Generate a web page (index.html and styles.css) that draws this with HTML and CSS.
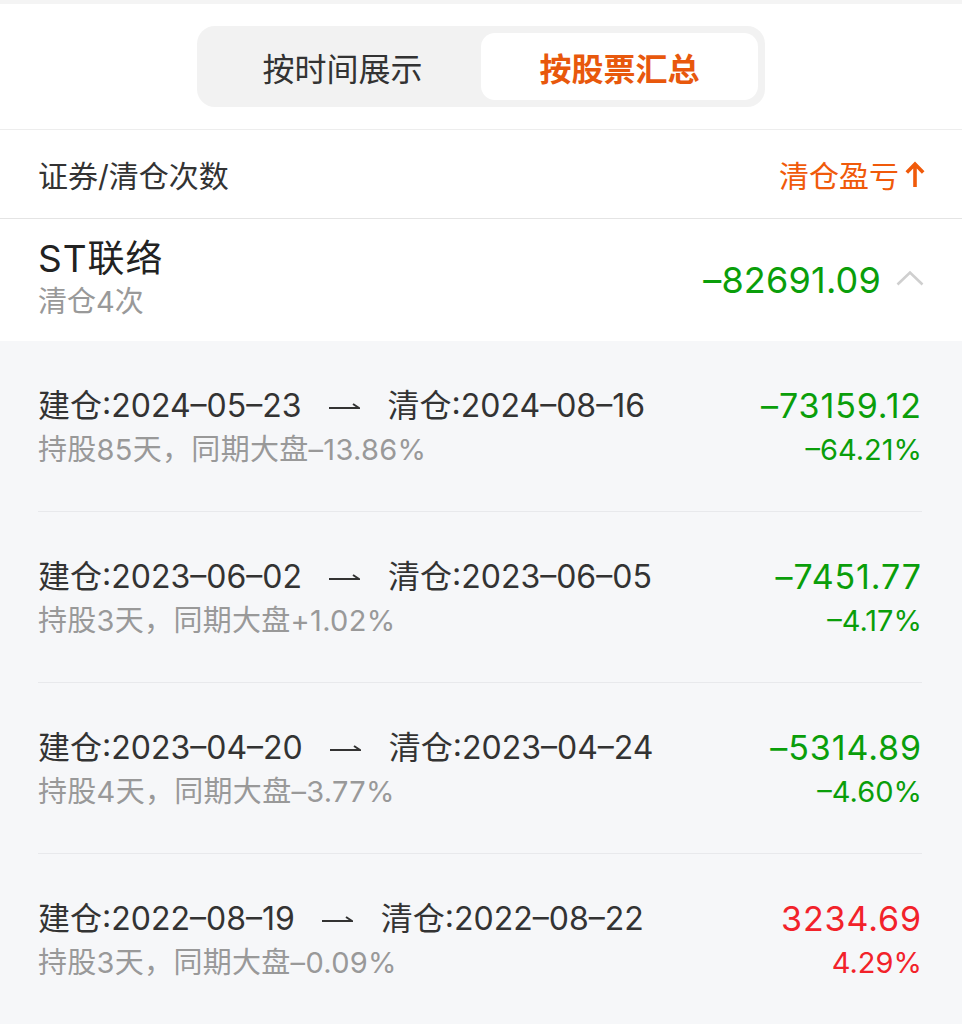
FILE: index.html
```html
<!DOCTYPE html>
<html lang="zh-CN">
<head>
  <meta charset="UTF-8">
  <title>清仓记录</title>
  <link rel="stylesheet" href="styles.css">
</head>
<body>
  <div class="topstrip"></div>

  <div class="tabs-wrap">
    <div class="tabs">
      <div class="tab">按时间展示</div>
      <div class="tab active">按股票汇总</div>
    </div>
  </div>

  <div class="list-head">
    <span>证券/清仓次数</span>
    <span class="sort">清仓盈亏
      <svg class="sort-arrow" width="20" height="27" viewBox="0 0 20 27">
        <path d="M10 4 V27 M1.8 12.5 L10 4 L18.2 12.5" fill="none" stroke="#f05a0a" stroke-width="3.6"/>
      </svg>
    </span>
  </div>

  <div class="stock">
    <div class="stock-info">
      <div class="stock-name">ST联络</div>
      <div class="stock-count">清仓4次</div>
    </div>
    <div class="stock-total">
      <span class="green">–82691.09</span>
      <svg class="chevron" width="28" height="16" viewBox="0 0 28 16">
        <polyline points="1.5,14.5 14,2.5 26.5,14.5" fill="none" stroke="#cfcfcf" stroke-width="2.6"/>
      </svg>
    </div>
  </div>

  <div class="trades">
    <div class="trade">
      <div class="trade-left">
        <div class="dates">
          <span>建仓:2024–05–23</span>
          <svg class="harpoon" width="32" height="14" viewBox="0 0 32 14"><path d="M1 9 H31 L25 5" fill="none" stroke="#333" stroke-width="2"/></svg>
          <span>清仓:2024–08–16</span>
        </div>
        <div class="note">持股85天，同期大盘–13.86%</div>
      </div>
      <div class="trade-right">
        <div class="amount green">–73159.12</div>
        <div class="rate green">–64.21%</div>
      </div>
    </div>

    <div class="trade">
      <div class="trade-left">
        <div class="dates">
          <span>建仓:2023–06–02</span>
          <svg class="harpoon" width="32" height="14" viewBox="0 0 32 14"><path d="M1 9 H31 L25 5" fill="none" stroke="#333" stroke-width="2"/></svg>
          <span>清仓:2023–06–05</span>
        </div>
        <div class="note">持股3天，同期大盘+1.02%</div>
      </div>
      <div class="trade-right">
        <div class="amount green">–7451.77</div>
        <div class="rate green">–4.17%</div>
      </div>
    </div>

    <div class="trade">
      <div class="trade-left">
        <div class="dates">
          <span>建仓:2023–04–20</span>
          <svg class="harpoon" width="32" height="14" viewBox="0 0 32 14"><path d="M1 9 H31 L25 5" fill="none" stroke="#333" stroke-width="2"/></svg>
          <span>清仓:2023–04–24</span>
        </div>
        <div class="note">持股4天，同期大盘–3.77%</div>
      </div>
      <div class="trade-right">
        <div class="amount green">–5314.89</div>
        <div class="rate green">–4.60%</div>
      </div>
    </div>

    <div class="trade">
      <div class="trade-left">
        <div class="dates">
          <span>建仓:2022–08–19</span>
          <svg class="harpoon" width="32" height="14" viewBox="0 0 32 14"><path d="M1 9 H31 L25 5" fill="none" stroke="#333" stroke-width="2"/></svg>
          <span>清仓:2022–08–22</span>
        </div>
        <div class="note">持股3天，同期大盘–0.09%</div>
      </div>
      <div class="trade-right">
        <div class="amount red">3234.69</div>
        <div class="rate red">4.29%</div>
      </div>
    </div>
  </div>
</body>
</html>
```

FILE: styles.css
```css
body {
  margin: 0;
  background: #f6f7f9;
  font-family: Inter, "Noto Sans CJK SC", sans-serif;
  color: #333;
}

.topstrip {
  height: 4px;
  background: #f4f4f4;
}

.green { color: #0a9e0a; }
.red { color: #f2222a; }

/* segmented control */
.tabs-wrap {
  background: #fff;
  padding: 22px 0 22px;
  border-bottom: 1px solid #ededed;
  display: flex;
  justify-content: center;
}

.tabs {
  display: flex;
  width: 554px;
  padding: 7px;
  background: #f2f2f2;
  border-radius: 18px;
}

.tab {
  flex: 1;
  height: 67px;
  display: flex;
  align-items: center;
  justify-content: center;
  font-size: 32px;
  color: #333;
  border-radius: 14px;
}

.tab.active {
  background: #fff;
  color: #e8580c;
  font-weight: bold;
}

/* column header */
.list-head {
  background: #fff;
  height: 88px;
  padding: 0 37px 0 38px;
  display: flex;
  align-items: center;
  justify-content: space-between;
  font-size: 30px;
  color: #333;
  border-bottom: 1px solid #e4e4e4;
}

.sort {
  color: #f05a0a;
  display: flex;
  align-items: center;
}

.sort-arrow {
  margin-left: 6px;
  margin-top: -2px;
}

/* stock summary row */
.stock {
  background: #fff;
  padding: 18px 38px 18px;
  display: flex;
  align-items: center;
  justify-content: space-between;
}

.stock-name {
  font-size: 37px;
  line-height: 44px;
  letter-spacing: 1px;
  color: #222;
}

.stock-count {
  font-size: 29px;
  line-height: 42px;
  color: #999;
}

.stock-total {
  display: flex;
  align-items: center;
  font-size: 36px;
  letter-spacing: 0.2px;
}

.chevron {
  margin-left: 15px;
  margin-top: -4px;
}

/* trade rows */
.trades {
  padding: 0 40px 0 38px;
}

.trade {
  display: flex;
  justify-content: space-between;
  padding: 45px 0 42px;
  border-bottom: 1px solid #e8e9ec;
}

.trade:last-child {
  border-bottom: none;
}

.dates {
  display: flex;
  align-items: center;
  font-size: 32px;
  line-height: 40px;
  color: #333;
}

.harpoon {
  margin: 0 28px 0 26px;
}

.note {
  margin-top: 5px;
  font-size: 29px;
  line-height: 38px;
  color: #999;
  letter-spacing: 0.3px;
}

.trade-right {
  text-align: right;
}

.amount {
  font-size: 34px;
  line-height: 40px;
  letter-spacing: 0.9px;
}

.rate {
  margin-top: 5px;
  font-size: 29px;
  line-height: 38px;
}
```
